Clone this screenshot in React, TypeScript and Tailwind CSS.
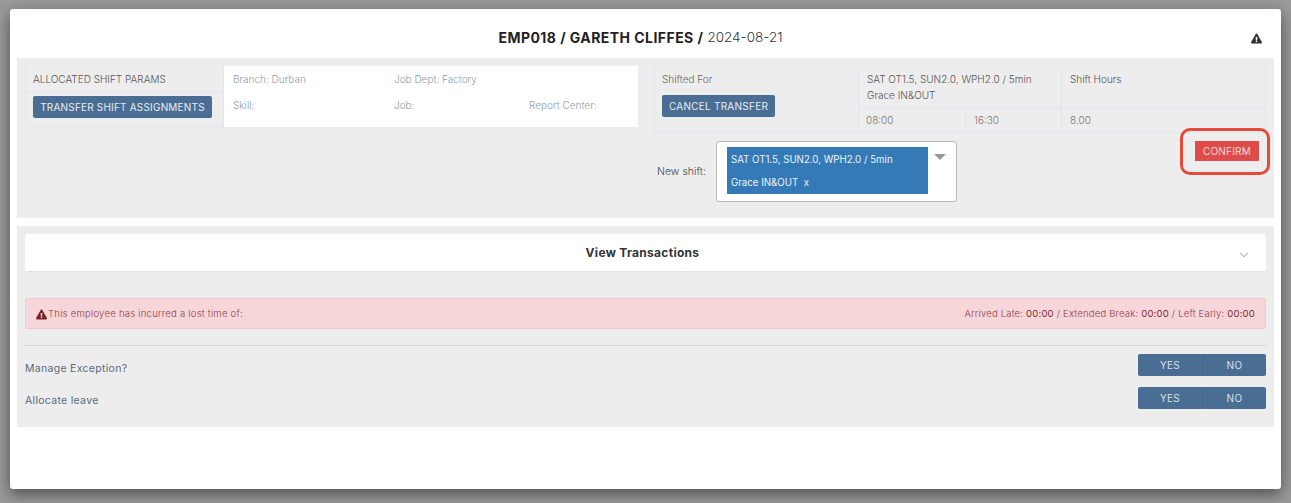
import { ChevronDown } from 'lucide-react';
import { FaExclamationTriangle } from 'react-icons/fa';

function Cell({ className, children }: { className?: string; children?: React.ReactNode }) {
  return <div className={`border-[#e2e5e9] text-[10px] ${className ?? ''}`}>{children}</div>;
}

function ShiftParams() {
  return (
    <div className="flex w-[613px] h-[61px] shrink-0">
      <div className="w-[199px] border-x border-b border-[#e2e5e9] flex flex-col">
        <div className="h-[27px] flex items-center pl-[7px] text-[10px] font-light text-[#555] border-b border-[#e2e5e9]">ALLOCATED SHIFT PARAMS</div>
        <div className="flex-1 pl-[7px] pt-[3px]">
          <button className="block w-[179px] h-[22px] bg-[#4a6d94] text-[#e8edf2] text-[10px] rounded-[2px] tracking-[0.2px]">TRANSFER SHIFT ASSIGNMENTS</button>
        </div>
      </div>
      <div className="flex-1 bg-white pl-[9px] text-[10px] font-light text-[#8f9ba8]">
        <div className="flex h-[27px] items-center">
          <span className="w-[161px]">Branch: Durban</span>
          <span>Job Dept: Factory</span>
        </div>
        <div className="flex h-[24px] items-center">
          <span className="w-[161px]">Skill:</span>
          <span className="w-[135px]">Job:</span>
          <span>Report Center:</span>
        </div>
      </div>
    </div>
  );
}

function ShiftedFor() {
  return (
    <div className="flex w-[612px] h-[67px] border-b border-x border-[#e2e5e9]">
      <Cell className="w-[203px] pl-[7px] font-light text-[#666] flex flex-col">
        <div className="h-[27px] flex items-center">Shifted For</div>
        <button className="w-[113px] h-[22px] mt-[2px] font-normal bg-[#4a6d94] text-[#e8edf2] rounded-[2px] tracking-[0.25px]">CANCEL TRANSFER</button>
      </Cell>
      <div className="w-[204px] flex flex-col border-x border-[#e2e5e9]">
        <Cell className="h-[42px] pl-[8px] pt-[5px] border-b text-[#555] font-light text-[9.6px] leading-[16px]">
          SAT OT1.5, SUN2.0, WPH2.0 / 5min
          <br />
          Grace IN&amp;OUT
        </Cell>
        <div className="flex flex-1">
          <Cell className="w-[107px] pl-[7px] border-r font-light text-[#777] flex items-center">08:00</Cell>
          <Cell className="flex-1 pl-[8px] font-light text-[#777] flex items-center">16:30</Cell>
        </div>
      </div>
      <div className="flex-1 flex flex-col">
        <Cell className="h-[42px] pl-[8px] pt-[5px] border-b font-light text-[#555] leading-[16px]">Shift Hours</Cell>
        <Cell className="flex-1 pl-[8px] font-light text-[#777] flex items-center">8.00</Cell>
      </div>
    </div>
  );
}

function NewShift() {
  return (
    <div className="flex relative">
      <div className="flex items-center pl-[3px] w-[62px] text-[10.5px] font-light text-[#444] h-[61px]">New shift:</div>
      <div className="w-[241px] h-[61px] bg-white border border-[#b8b8b8] rounded-[3px] pl-[10px] pt-[5px] flex">
        <div className="w-[201px] h-[47px] bg-[#337ab7] text-[#eef4fa] text-[9.7px] pl-[4px] flex flex-col justify-around pt-[2px]">
          <span>SAT OT1.5, SUN2.0, WPH2.0 / 5min</span>
          <span className="mt-[1px]">Grace IN&amp;OUT&nbsp; x</span>
        </div>
        <div className="ml-[6px] mt-[7px] w-0 h-0 border-x-[6px] border-x-transparent border-t-[6px] border-t-[#999]" />
      </div>
    </div>
  );
}

function YesNo() {
  return (
    <div className="flex w-[128px] h-[22px] bg-[#4a6d94] rounded-[2px] text-[10px] text-[#d8e0e8]">
      <div className="w-[65px] flex items-center justify-center border-r border-[#456688]">YES</div>
      <div className="flex-1 flex items-center justify-center">NO</div>
    </div>
  );
}

export default function App() {
  return (
    <div className="h-screen bg-[#9a9a9a] pt-[9px] px-[10px] overflow-hidden font-['Inter',sans-serif]">
      <div className="h-[480px] bg-white rounded-[3px] shadow-[0_5px_15px_rgba(0,0,0,0.5)] px-[7px]">
        <div className="h-[49px] relative flex items-center justify-center pt-[7px] pr-[10px] text-[14px] text-[#222]">
          <span className="font-bold tracking-[0.45px]">EMP018 / GARETH CLIFFES /</span>
          <span className="ml-1 text-[13.5px] font-light text-[#333]">2024-08-21</span>
          <FaExclamationTriangle className="absolute right-[12px] top-[24px] text-[#333]" size={11} />
        </div>

        <div className="h-[160px] bg-[#ededed] pt-2 px-2 flex relative">
          <ShiftParams />
          <div className="ml-[16px] flex flex-col">
            <ShiftedFor />
            <div className="mt-[8px]">
              <NewShift />
            </div>
          </div>
          <button className="absolute left-[1178px] top-[83px] w-[64px] h-[20px] bg-[#dd4b4b] text-[#f9dcdc] text-[10px] tracking-[0.2px]">CONFIRM</button>
          <div className="absolute left-[1163px] top-[70px] w-[90px] h-[47px] border-[3px] border-[#e5493a] rounded-[10px]" />
        </div>

        <div className="h-[201px] mt-2 bg-[#ededed] pt-2 px-2">
          <div className="h-[38px] bg-white rounded-[3px] border-b border-[#e2e2e2] flex items-center justify-center pr-[6px] relative">
            <span className="text-[12px] font-bold text-[#333] tracking-[0.3px]">View Transactions</span>
            <ChevronDown className="absolute right-[15px] top-[14px] text-[#888]" size={14} strokeWidth={1.5} />
          </div>

          <div className="mt-[26px] h-[31px] pt-[1px] bg-[#f6d6d9] border border-[#f3c9cd] rounded-[2px] flex items-center justify-between px-[10px] text-[9.5px] font-light text-[#8f3a47]">
            <span className="flex items-center gap-[1px] tracking-[0.25px]">
              <FaExclamationTriangle className="text-[#7c1f2b]" size={11} />
              This employee has incurred a lost time of:
            </span>
            <span className="tracking-[0.2px]">
              Arrived Late: <span className="font-normal text-[#7c2a36]">00:00</span> / Extended Break: <span className="font-normal text-[#7c2a36]">00:00</span> / Left Early: <span className="font-normal text-[#7c2a36]">00:00</span>
            </span>
          </div>

          <div className="mt-4 border-t border-[#d4d4d4] pt-2">
            <div className="flex justify-between h-[22px] text-[10.5px] text-[#5a6b7b] tracking-[0.3px]">
              <span className="mt-[7px]">Manage Exception?</span>
              <YesNo />
            </div>
            <div className="flex justify-between h-[22px] mt-[11px] text-[10.5px] text-[#5a6b7b] tracking-[0.3px]">
              <span className="mt-[6px]">Allocate leave</span>
              <YesNo />
            </div>
          </div>
        </div>
      </div>
    </div>
  );
}
